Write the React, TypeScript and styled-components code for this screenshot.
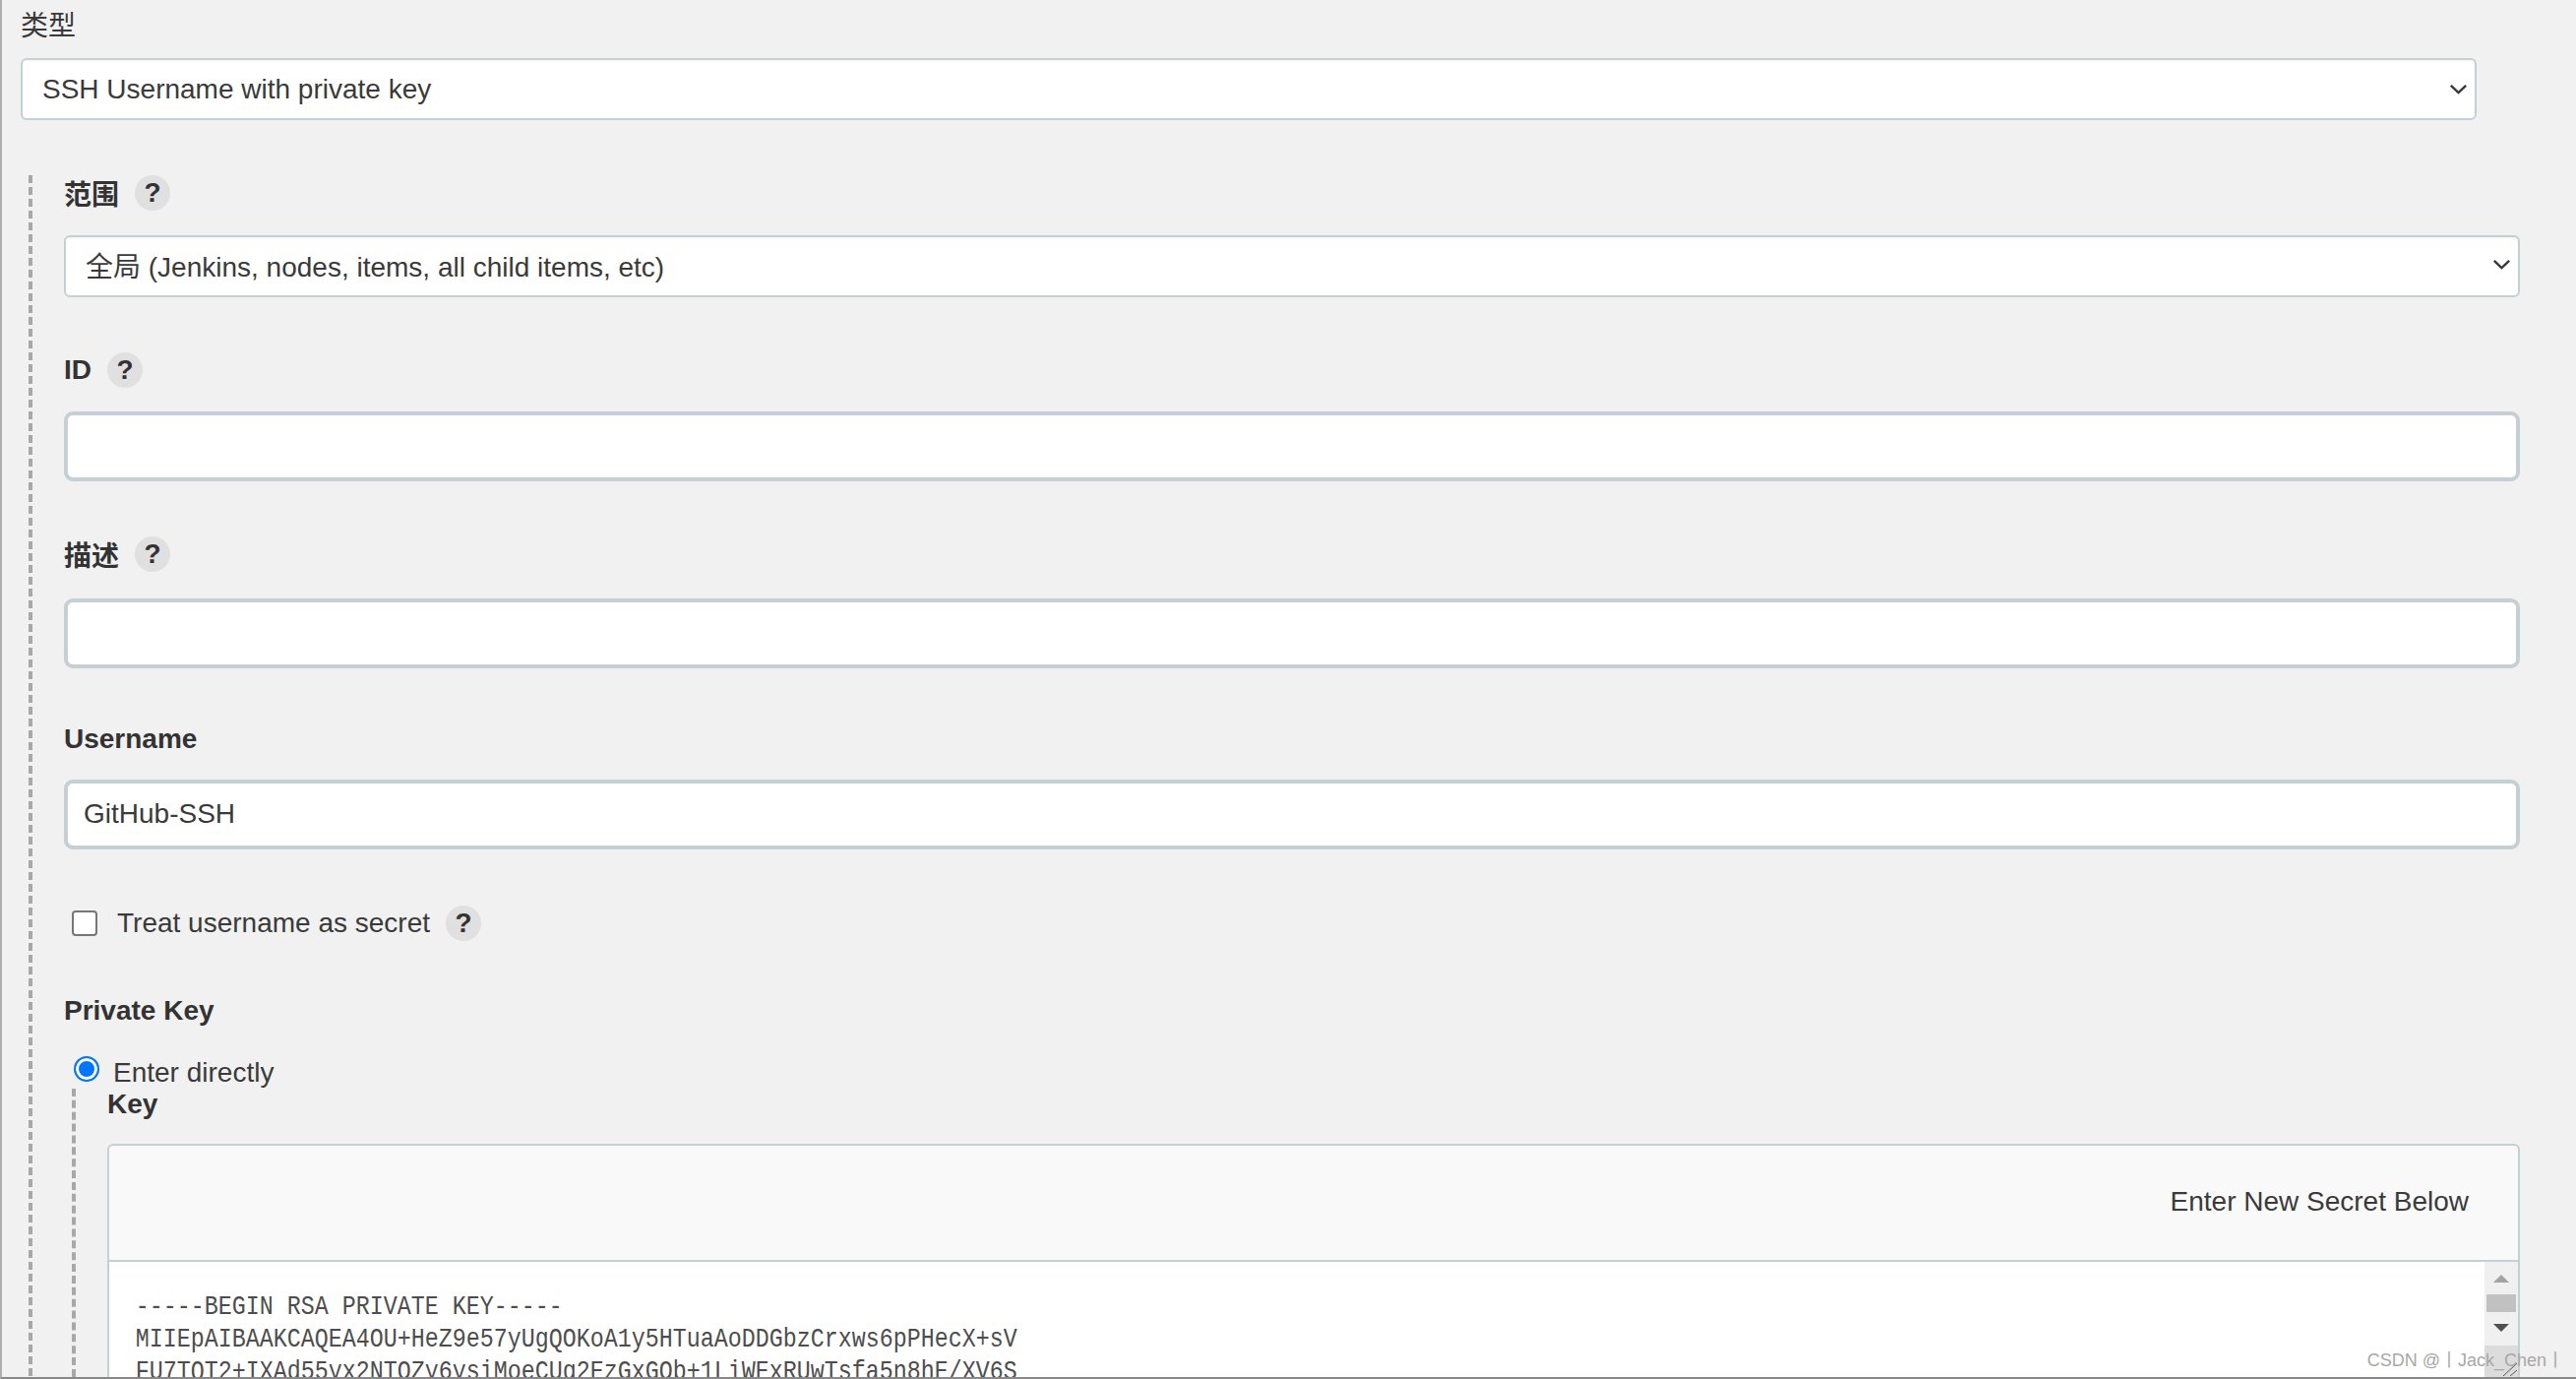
import styled, { createGlobalStyle } from "styled-components";

const GlobalStyle = createGlobalStyle`
  html, body { margin: 0; padding: 0; background: #f1f1f1; overflow: hidden; height: 100%; }
  body { font-family: "Liberation Sans", "Noto Sans CJK SC", sans-serif; color: #3a3a3a; }
`;

const Page = styled.div`
  position: relative;
  width: 2618px;
  height: 1401px;
  overflow: hidden;
  box-sizing: border-box;
  border-left: 2px solid #aeaeae;
  border-bottom: 2px solid #888;
  padding: 0 57px 0 19px;
  font-size: 28px;
`;

const TypeLabel = styled.div`
  height: 59px;
  line-height: 54px;
`;

const Select = styled.div<{ $w?: number; $lift?: number }>`
  box-sizing: border-box;
  width: ${(p) => (p.$w ? `${p.$w}px` : "auto")};
  height: 63px;
  background: #fff;
  border: 2px solid #c5d0d4;
  border-radius: 6px;
  box-shadow: inset 0 2px 2px rgba(0, 0, 0, 0.03);
  padding: 0 8px ${(p) => p.$lift ?? 0}px 20px;
  display: flex;
  align-items: center;
  justify-content: space-between;
`;

const Inner = styled.div`
  margin: 56px 0 0 8px;
  border-left: 4px dashed #a8a8a8;
  padding-left: 32px;
`;

const Field = styled.div<{ $after: number }>`
  margin-bottom: ${(p) => p.$after}px;
`;

const Label = styled.div<{ $gap: number }>`
  display: flex;
  align-items: center;
  gap: 16px;
  font-weight: 700;
  height: 36px;
  color: #333;
  margin-bottom: ${(p) => p.$gap}px;
`;

const Help = styled.span`
  flex: none;
  width: 36px;
  height: 36px;
  border-radius: 50%;
  background: #e0e0e0;
  color: #333;
  font-weight: 700;
  font-size: 28px;
  display: inline-flex;
  align-items: center;
  justify-content: center;
`;

const TextBox = styled.div`
  box-sizing: border-box;
  height: 71px;
  background: #fff;
  border: 4px solid #c5d0d4;
  border-radius: 9px;
  padding: 0 16px 2px;
  display: flex;
  align-items: center;
`;

const CheckRow = styled.div`
  display: flex;
  align-items: center;
  height: 36px;
  margin: 0 0 53px 8px;
`;

const CheckBox = styled.span`
  box-sizing: border-box;
  width: 26px;
  height: 26px;
  background: #fff;
  border: 2px solid #767676;
  border-radius: 4px;
  margin-right: 20px;
`;

const CheckHelp = styled(Help)`
  margin-left: 16px;
`;

const RadioRow = styled.div`
  display: flex;
  align-items: flex-start;
  height: 34px;
  line-height: 36px;
  margin-left: 10px;
`;

const Radio = styled.span`
  box-sizing: border-box;
  width: 26px;
  height: 26px;
  margin: 1px 14px 0 0;
  border-radius: 50%;
  border: 2px solid #0075ff;
  background: #0075ff;
  box-shadow: inset 0 0 0 3px #fff;
`;

const Nested = styled.div`
  margin-left: 8px;
  border-left: 4px dashed #a8a8a8;
  padding-left: 32px;
`;

const KeyLabel = styled.div`
  font-weight: 700;
  color: #333;
  height: 56px;
  line-height: 32px;
`;

const SecretBox = styled.div`
  box-sizing: border-box;
  background: #f9f9f9;
  border: 2px solid #c5d0d4;
  border-bottom: none;
  border-radius: 6px 6px 0 0;
`;

const SecretHead = styled.div`
  box-sizing: border-box;
  height: 118px;
  display: flex;
  align-items: center;
  justify-content: flex-end;
  padding: 0 50px 2px 0;
  border-bottom: 2px solid #c5d0d4;
`;

const KeyArea = styled.div`
  position: relative;
  background: #fff;
  height: 200px;
  overflow: hidden;
`;

const KeyText = styled.div`
  padding: 29px 0 0 32px;
  font-family: "Liberation Mono", monospace;
  font-size: 28px;
  line-height: 33px;
  color: #4d4d4d;
  white-space: pre;
  transform: scaleX(0.8333);
  transform-origin: 0 0;
`;

const Scrollbar = styled.div`
  position: absolute;
  top: 0;
  right: 0;
  bottom: 0;
  width: 34px;
  background: #f0f0f0;
  display: flex;
  flex-direction: column;
  align-items: center;
  padding-top: 13px;
`;

const ArrowUp = styled.span`
  width: 0;
  height: 0;
  border-left: 8px solid transparent;
  border-right: 8px solid transparent;
  border-bottom: 8px solid #a3a3a3;
`;

const ArrowDown = styled.span`
  width: 0;
  height: 0;
  border-left: 8px solid transparent;
  border-right: 8px solid transparent;
  border-top: 8px solid #505050;
`;

const Thumb = styled.span`
  width: 30px;
  height: 18px;
  margin: 12px 0;
  background: #c1c1c1;
`;

const Corner = styled.span`
  align-self: stretch;
  height: 40px;
  margin-top: 14px;
  background: #dcdcdc;
  display: flex;
  justify-content: flex-end;
  align-items: flex-start;
  padding-top: 17px;
`;

const Watermark = styled.div`
  position: absolute;
  right: 12px;
  bottom: 7px;
  font-size: 18px;
  line-height: 20px;
  color: #a8a8a8;
`;

const Chevron = () => (
  <svg width="17" height="10" viewBox="0 0 17 10" fill="none" stroke="#3a3a3a" strokeWidth="2.4">
    <path d="M.8.8l7.7 7.4L16.2.8" />
  </svg>
);

const Resizer = () => (
  <svg width="16" height="14" viewBox="0 0 16 14" fill="none" stroke="#555" strokeWidth="1">
    <path d="M1 14L15 1M8 14l7-6" />
  </svg>
);

export default function App() {
  return (
    <>
      <GlobalStyle />
      <Page>
        <TypeLabel>类型</TypeLabel>
        <Select $w={2496}>
          SSH Username with private key
          <Chevron />
        </Select>
        <Inner>
          <Field $after={56}>
            <Label $gap={25}>范围 <Help>?</Help></Label>
            <Select $lift={3}>
              全局 (Jenkins, nodes, items, all child items, etc)
              <Chevron />
            </Select>
          </Field>
          <Field $after={56}>
            <Label $gap={24}>ID <Help>?</Help></Label>
            <TextBox />
          </Field>
          <Field $after={54}>
            <Label $gap={27}>描述 <Help>?</Help></Label>
            <TextBox />
          </Field>
          <Field $after={57}>
            <Label $gap={23}>Username</Label>
            <TextBox>GitHub-SSH</TextBox>
          </Field>
          <CheckRow>
            <CheckBox />
            Treat username as secret
            <CheckHelp>?</CheckHelp>
          </CheckRow>
          <Label $gap={27}>Private Key</Label>
          <RadioRow>
            <Radio />
            Enter directly
          </RadioRow>
          <Nested>
            <KeyLabel>Key</KeyLabel>
            <SecretBox>
              <SecretHead>Enter New Secret Below</SecretHead>
              <KeyArea>
                <KeyText>
                  {"-----BEGIN RSA PRIVATE KEY-----\nMIIEpAIBAAKCAQEA4OU+HeZ9e57yUgQOKoA1y5HTuaAoDDGbzCrxws6pPHecX+sV\nFU7TQT2+IXAd55yx2NTOZy6ysiMoeCUg2EzGxGOb+1LiWExRUwTsfa5n8hE/XV6S"}
                </KeyText>
                <Scrollbar>
                  <ArrowUp />
                  <Thumb />
                  <ArrowDown />
                  <Corner>
                    <Resizer />
                  </Corner>
                </Scrollbar>
              </KeyArea>
            </SecretBox>
          </Nested>
        </Inner>
        <Watermark>CSDN @丨Jack_Chen丨</Watermark>
      </Page>
    </>
  );
}
